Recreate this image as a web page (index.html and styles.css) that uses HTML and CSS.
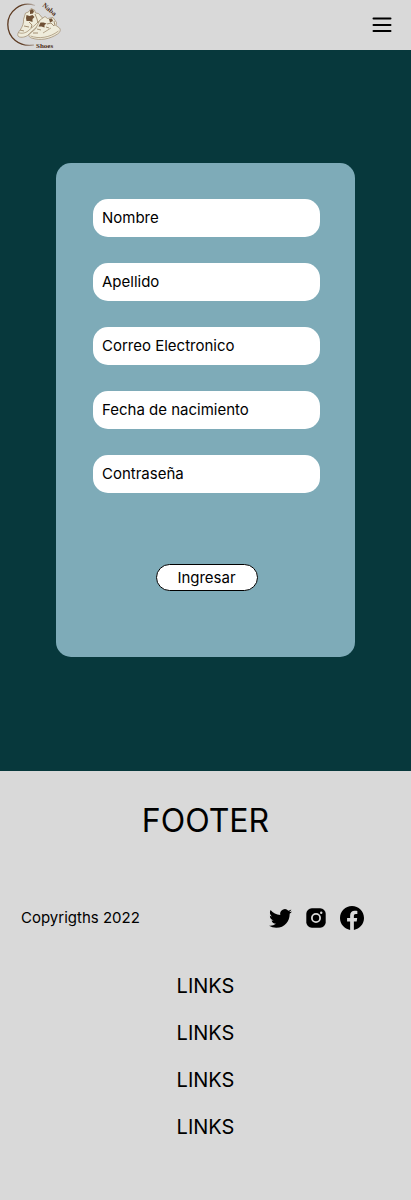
FILE: index.html
```html
<!DOCTYPE html>
<html lang="es">
<head>
<meta charset="utf-8">
<meta name="viewport" content="width=device-width, initial-scale=1">
<title>Naba Shoes</title>
<link rel="stylesheet" href="styles.css">
</head>
<body>
<header class="topbar">
  <a class="logo" href="#" aria-label="Naba Shoes">
    <svg class="logo-image" viewBox="0 0 60 50" aria-hidden="true">
      <defs>
        <linearGradient id="ring" x1="0" x2="1"><stop offset="0.5" stop-color="#5d3a21"/><stop offset="1" stop-color="#5d3a21" stop-opacity=".2"/></linearGradient>
      </defs>
      <path d="M35 5.500C21 .5 7.800 11.500 7.800 24.500S19 47.300 34 45" fill="none" stroke="url(#ring)" stroke-width="1.300"/>
      <g stroke="#9c8768" stroke-width=".7" stroke-linejoin="round">
        <path d="M25.500 13l3-1 2.500-3.500 3.500 1.500 1 3 3 .5 4 4.500-1 6-6 4-8 7.500c-3 2-8 2.500-9.500.5-.8-2 .4-4 2.500-6.500 2-3 3.500-7 3-10z" fill="#efecdb"/>
        <path d="M18.500 32.500c3 1.500 7 .5 9.500-1.500l7-6 5-5" fill="none"/>
        <path d="M40 20l5-3.500 2.500 2 5.500-1 3.500 5-.5 3 3.500 2.500c1.500 2 .5 4.500-2 6-7.500 5-17 7-26 4-2.500-1-3.500-2.500-1.500-4.500l5.500-4.500z" fill="#efecdb"/>
        <path d="M30.500 36c8 3 19 2 28-5M43 33l8-5" fill="none"/>
      </g>
      <path d="M30 10.500l2-1.500 2 2-1 2.500-3 .5zM26.500 15l3 1 3-1 2 2-2 2 0 3-3-1-3 0-.5-3zM49 19l3-.5 1 2.500-3 1.500zM40.500 22.500l3 0 3 1-2 1.500 0 2.500-3-1-3 0z" fill="#6f5035"/>
      <path d="M35 14l2 5 1 4M29 22l3 3-1 3M24 26l5 1M20 30l4 1M47 24l4-1 3 3M46 27l3 1M37 29l4 1M33 33l5 0M54 21l1 5" fill="none" stroke="#8f7758" stroke-width=".8"/>
      <text class="logo-text" x="42" y="6" transform="rotate(40 42 6)">Naba</text>
      <text class="logo-text" x="36" y="48">Shoes</text>
    </svg>
  </a>
  <button class="menu" type="button" aria-label="Menú">
    <svg viewBox="0 0 24 24" width="24" height="24" aria-hidden="true"><path d="M3.500 5.500h17M3.500 12h17M3.500 18h17" stroke="#000" stroke-width="2" stroke-linecap="round"/></svg>
  </button>
</header>
<main class="content">
  <form class="card">
    <input class="field" type="text" placeholder="Nombre" aria-label="Nombre">
    <input class="field" type="text" placeholder="Apellido" aria-label="Apellido">
    <input class="field" type="email" placeholder="Correo Electronico" aria-label="Correo Electronico">
    <input class="field" type="text" placeholder="Fecha de nacimiento" aria-label="Fecha de nacimiento">
    <input class="field" type="password" placeholder="Contraseña" aria-label="Contraseña">
    <button class="submit" type="submit">Ingresar</button>
  </form>
</main>
<footer class="footer">
  <h2 class="footer-title">FOOTER</h2>
  <div class="footer-row">
    <p class="copyright">Copyrigths 2022</p>
    <div class="social">
      <a href="#" aria-label="Twitter"><svg viewBox="0 0 24 24" width="23" height="23" aria-hidden="true"><path d="M23.953 4.570a10 10 0 01-2.825.775 4.958 4.958 0 002.163-2.723c-.951.555-2.005.959-3.127 1.184a4.920 4.920 0 00-8.384 4.482C7.690 8.095 4.067 6.130 1.640 3.162a4.822 4.822 0 00-.666 2.475c0 1.710.870 3.213 2.188 4.096a4.904 4.904 0 01-2.228-.616v.060a4.923 4.923 0 003.946 4.827 4.996 4.996 0 01-2.212.085 4.936 4.936 0 004.604 3.417 9.867 9.867 0 01-6.102 2.105c-.390 0-.779-.023-1.170-.067a13.995 13.995 0 007.557 2.209c9.053 0 13.998-7.496 13.998-13.985 0-.210 0-.420-.015-.630A9.935 9.935 0 0024 4.590z"/></svg></a>
      <a href="#" aria-label="Instagram"><svg viewBox="0 0 24 24" width="24" height="24" aria-hidden="true"><rect x="2.300" y="2.300" width="19.400" height="19.400" rx="5.500"/><circle cx="12" cy="12" r="4.100" fill="none" stroke="#d9d9d9" stroke-width="1.800"/><circle cx="17.200" cy="6.800" r="1.200" fill="#d9d9d9"/></svg></a>
      <a href="#" aria-label="Facebook"><svg viewBox="0 0 24 24" width="24" height="24" aria-hidden="true"><path d="M24 12.073c0-6.627-5.373-12-12-12s-12 5.373-12 12c0 5.990 4.388 10.954 10.125 11.854v-8.385H7.078v-3.470h3.047V9.430c0-3.007 1.792-4.669 4.533-4.669 1.312 0 2.686.235 2.686.235v2.953H15.830c-1.491 0-1.956.925-1.956 1.874v2.250h3.328l-.532 3.470h-2.796v8.385C19.612 23.027 24 18.062 24 12.073z"/></svg></a>
    </div>
  </div>
  <nav class="links" aria-label="Enlaces">
    <a href="#">LINKS</a>
    <a href="#">LINKS</a>
    <a href="#">LINKS</a>
    <a href="#">LINKS</a>
  </nav>
</footer>
</body>
</html>
```

FILE: styles.css
```css
* { box-sizing: border-box; }

body {
  margin: 0;
  min-height: 100vh;
  display: flex;
  flex-direction: column;
  background: #d9d9d9;
  color: #000;
  font-family: Inter, "Liberation Sans", sans-serif;
  font-size: 15px;
}

.topbar {
  display: flex;
  align-items: center;
  justify-content: space-between;
  height: 50px;
  padding-right: 17px;
}

.logo { display: block; }

.logo-image {
  display: block;
  width: 60px;
  height: 50px;
  overflow: visible;
}

.logo-text {
  font-family: "Liberation Serif", serif;
  font-size: 7px;
  font-weight: 700;
  fill: #4a2a14;
}

.menu {
  display: flex;
  padding: 0;
  border: 0;
  background: none;
  cursor: pointer;
}

.content {
  padding: 113px 56px 114px;
  background: #07383c;
}

.card {
  display: flex;
  flex-direction: column;
  gap: 26px;
  max-width: 480px;
  margin: 0 auto;
  padding: 36px 35px 66px 37px;
  border-radius: 15px;
  background: #7eabb8;
}

.field {
  width: 100%;
  height: 38px;
  padding: 0 9px 2px;
  border: 0;
  border-radius: 15px;
  background: #fff;
  color: #000;
  font: inherit;
}

.field::placeholder {
  color: #000;
  opacity: 1;
}

.submit {
  align-self: center;
  min-width: 102px;
  height: 27px;
  margin-top: 45px;
  padding: 0 20px;
  border: 1px solid #000;
  border-radius: 15px;
  background: #fff;
  color: #000;
  font: inherit;
  cursor: pointer;
}

.footer {
  flex: 1;
  padding: 30px 21px 48px;
}

.footer-title {
  margin: 0;
  font-size: 32px;
  font-weight: 400;
  line-height: 40px;
  text-align: center;
}

.footer-row {
  display: flex;
  align-items: center;
  justify-content: space-between;
  margin-top: 65px;
  padding-right: 26px;
}

.copyright {
  margin: 0;
  line-height: 24px;
}

.social {
  display: flex;
  align-items: center;
  gap: 12px;
}

.social a {
  display: flex;
  color: #000;
}

.links {
  display: flex;
  flex-direction: column;
  align-items: center;
  gap: 23px;
  margin-top: 44px;
}

.links a {
  color: #000;
  font-size: 20px;
  line-height: 24px;
  text-decoration: none;
}
```
